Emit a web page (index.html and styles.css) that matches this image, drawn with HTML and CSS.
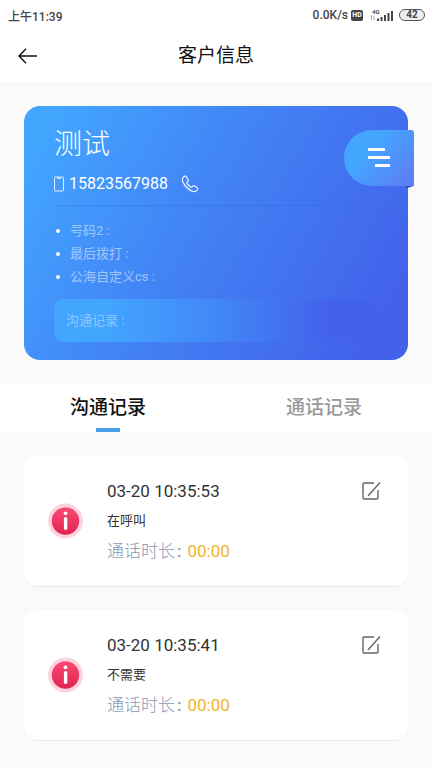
FILE: index.html
```html
<!DOCTYPE html>
<html lang="zh-CN">
<head>
<meta charset="utf-8">
<meta name="viewport" content="width=device-width, initial-scale=1">
<title>客户信息</title>
<link rel="stylesheet" href="styles.css">
</head>
<body>
<div class="status">
  <span class="status-time">上午11:39</span>
  <div class="status-right">
    <span>0.0K/s</span>
    <span class="hd">HD</span>
    <svg class="signal" width="25" height="14" viewBox="0 0 25 14" aria-hidden="true">
      <text x="3" y="6" class="net">4G</text>
      <path d="M2.5 12V7.5M1.5 8.5l1-1M5 7.5V12l1-1" fill="none" stroke="#999" stroke-width=".8"/>
      <path d="M8 13v-2l2-1v3zM11.500 13V9h2v4zM15 13V7h2v6zM18.500 13V5h2v8zM22 13V3h2v10z" fill="#444"/>
    </svg>
    <span class="battery">42</span>
  </div>
</div>
<header class="header">
  <button class="back" aria-label="返回">
    <svg width="20" height="16" viewBox="0 0 20 16" aria-hidden="true"><path d="M8 .8L1 8l7 7.200M1 8h18" fill="none" stroke="#111" stroke-width="1.400"/></svg>
  </button>
  <h1>客户信息</h1>
</header>
<main>
  <section class="card">
    <h2>测试</h2>
    <div class="phone">
      <svg class="mobile" width="10" height="16" viewBox="0 0 10 16" aria-hidden="true"><rect x=".5" y="1" width="9" height="14" rx="1" fill="none" stroke="#fff" stroke-opacity=".85"/><path d="M3 2.200h4" stroke="#fff" stroke-width="1.200"/></svg>
      <span>15823567988</span>
      <button class="call" aria-label="拨打电话">
        <svg width="18" height="18" viewBox="0 0 18 18" aria-hidden="true"><path d="M2.200 2.300C3.300 1 4.700.7 5.400 1.700L7.100 4.500C7.600 5.400 7.200 6 6.500 6.600C5.700 7.200 5.700 7.800 6.200 8.600C7.100 10.100 8.200 11.200 9.600 12C10.400 12.500 10.900 12.200 11.400 11.500C12 10.800 12.600 10.500 13.500 11L16.200 12.600C17.200 13.300 16.900 14.600 15.700 15.700C14.300 17 12.300 16.800 10.200 15.700C6.700 13.900 4 11.200 2.200 7.700C1.100 5.600 1 3.700 2.200 2.300Z" fill="none" stroke="#fff" stroke-width="1.100"/></svg>
      </button>
    </div>
    <ul class="fields">
      <li>号码2 :</li>
      <li>最后拨打 :</li>
      <li>公海自定义cs :</li>
    </ul>
    <p class="memo">沟通记录 :</p>
    <button class="ribbon" aria-label="菜单">
      <svg width="24" height="20" viewBox="0 0 24 20" aria-hidden="true"><g fill="#fff"><rect x="1" y="0" width="17" height="3" rx=".5"/><rect x="1" y="8" width="22" height="3" rx=".5"/><rect x="8" y="16" width="15" height="3" rx=".5"/></g></svg>
    </button>
  </section>
  <nav class="tabs">
    <button class="tab active">沟通记录</button>
    <button class="tab">通话记录</button>
  </nav>
  <section class="records">
    <article class="record">
      <svg class="info" width="36" height="36" viewBox="0 0 36 36" aria-hidden="true">
        <defs><linearGradient id="red" x1="0" y1="0" x2="0" y2="1"><stop offset="0" stop-color="#fb4a75"/><stop offset="1" stop-color="#e02451"/></linearGradient></defs>
        <circle cx="17.500" cy="18" r="17.500" fill="#fdd3de"/><circle cx="17.500" cy="18" r="13.700" fill="url(#red)"/>
        <circle cx="17.500" cy="10.300" r="1.900" fill="#fff"/><rect x="15.900" y="14" width="3.400" height="13" rx="1.700" fill="#fff"/>
      </svg>
      <div class="detail">
        <time>03-20 10:35:53</time>
        <p class="note">在呼叫</p>
        <p class="duration"><span>通话时长<span class="colon">:</span></span><b>00:00</b></p>
      </div>
      <button class="edit" aria-label="编辑">
        <svg width="20" height="20" viewBox="0 0 20 20" aria-hidden="true"><path d="M13 2H3Q2 2 2 3V17Q2 18 3 18H16Q17 18 17 17V9M19 1.500L7 15" fill="none" stroke="#666" stroke-width="1.400"/></svg>
      </button>
    </article>
    <article class="record">
      <svg class="info" width="36" height="36" viewBox="0 0 36 36" aria-hidden="true">
        <circle cx="17.500" cy="18" r="17.500" fill="#fdd3de"/><circle cx="17.500" cy="18" r="13.700" fill="url(#red)"/>
        <circle cx="17.500" cy="10.300" r="1.900" fill="#fff"/><rect x="15.900" y="14" width="3.400" height="13" rx="1.700" fill="#fff"/>
      </svg>
      <div class="detail">
        <time>03-20 10:35:41</time>
        <p class="note">不需要</p>
        <p class="duration"><span>通话时长<span class="colon">:</span></span><b>00:00</b></p>
      </div>
      <button class="edit" aria-label="编辑">
        <svg width="20" height="20" viewBox="0 0 20 20" aria-hidden="true"><path d="M13 2H3Q2 2 2 3V17Q2 18 3 18H16Q17 18 17 17V9M19 1.500L7 15" fill="none" stroke="#666" stroke-width="1.400"/></svg>
      </button>
    </article>
  </section>
</main>
</body>
</html>
```
FILE: styles.css
```css
* { box-sizing: border-box; margin: 0; padding: 0; }
body { background: #fafafa; color: #333; font-family: Roboto, "Noto Sans CJK SC", sans-serif; }
button { background: none; border: 0; font: inherit; color: inherit; cursor: pointer; }
svg { display: block; }

.status { display: flex; justify-content: space-between; align-items: center; height: 30px; padding: 0 7px 0 8px; background: #fff; font-size: 12px; font-weight: 500; color: #444; }
.status-right { display: flex; align-items: center; gap: 3px; }
.hd { width: 12px; height: 11px; border-radius: 2px; background: #444; color: #fff; font-size: 7px; font-weight: 700; line-height: 11px; text-align: center; }
.signal { margin: 0 2px 0 3px; }
.net { font-size: 6px; font-weight: 700; fill: #444; }
.battery { width: 26px; height: 12px; border: 1px solid #555; border-radius: 6px; background: #eee; font-size: 10px; font-weight: 700; line-height: 10px; text-align: center; }

.header { display: grid; grid-template-columns: 56px 1fr 56px; align-items: center; height: 52px; background: #fff; }
.header h1 { font-size: 19px; font-weight: 400; line-height: 28px; text-align: center; color: #111; }
.back { height: 52px; padding-left: 18px; }

.card { position: relative; margin: 24px; padding: 22px 30px 18px; border-radius: 16px; background: linear-gradient(120deg, #42a6ff 6%, #4285f6 42%, #4262ea 90%); color: #fff; }
.card h2 { font-size: 28px; font-weight: 300; line-height: 34px; }
.phone { display: flex; align-items: center; height: 44px; border-bottom: 1px solid rgba(40, 100, 225, .35); font-size: 16px; }
.mobile { margin-right: 5px; }
.call { margin-left: 13px; }
.fields { margin: 13px 0 11px; list-style: none; font-size: 13px; line-height: 23px; color: rgba(255, 255, 255, .5); }
.fields li { display: flex; align-items: center; gap: 10px; }
.fields li::before { content: ""; width: 4px; height: 4px; margin-left: 2px; border-radius: 50%; background: #fff; }
.memo { padding: 0 12px; border-radius: 10px; background: linear-gradient(90deg, #42a6ff 15%, #4287f7 50%, #4262ea 85%); font-size: 13px; line-height: 43px; color: rgba(255, 255, 255, .4); }
.ribbon { position: absolute; top: 24px; right: -6px; display: grid; place-items: center; width: 70px; height: 56px; border-radius: 28px 3px 0 28px; background: linear-gradient(130deg, #42a6ff 35%, #5b80f5 90%); }
.ribbon::after { content: ""; position: absolute; top: 100%; right: 0; width: 8px; height: 2px; background: #2849b8; clip-path: polygon(0 0, 100% 0, 10% 100%); }

.tabs { display: grid; grid-template-columns: 1fr 1fr; background: #fff; }
.tab { display: grid; justify-items: center; padding-top: 10px; font-size: 19px; font-weight: 500; line-height: 28px; color: #999; }
.tab::after { content: ""; width: 24px; height: 4px; margin-top: 6px; }
.tab.active { color: #111; }
.tab.active::after { background: #4a9fea; }

.records { display: grid; gap: 24px; padding: 24px; }
.record { display: flex; align-items: center; padding: 20px 27px 20px 24px; border-radius: 14px; background: #fff; box-shadow: 0 1px 1px rgba(0, 0, 0, .07); }
.detail { flex: 1; margin-left: 23px; line-height: 30px; }
.detail time { display: block; font-size: 17px; }
.note { font-size: 13px; }
.duration { display: flex; gap: 6px; font-size: 17px; font-weight: 300; color: #8997b5; }
.duration b { font-weight: 400; color: #f0b429; }
.colon { margin-left: 2px; font-weight: 500; }
.edit { align-self: flex-start; padding: 5px 0; }
```
